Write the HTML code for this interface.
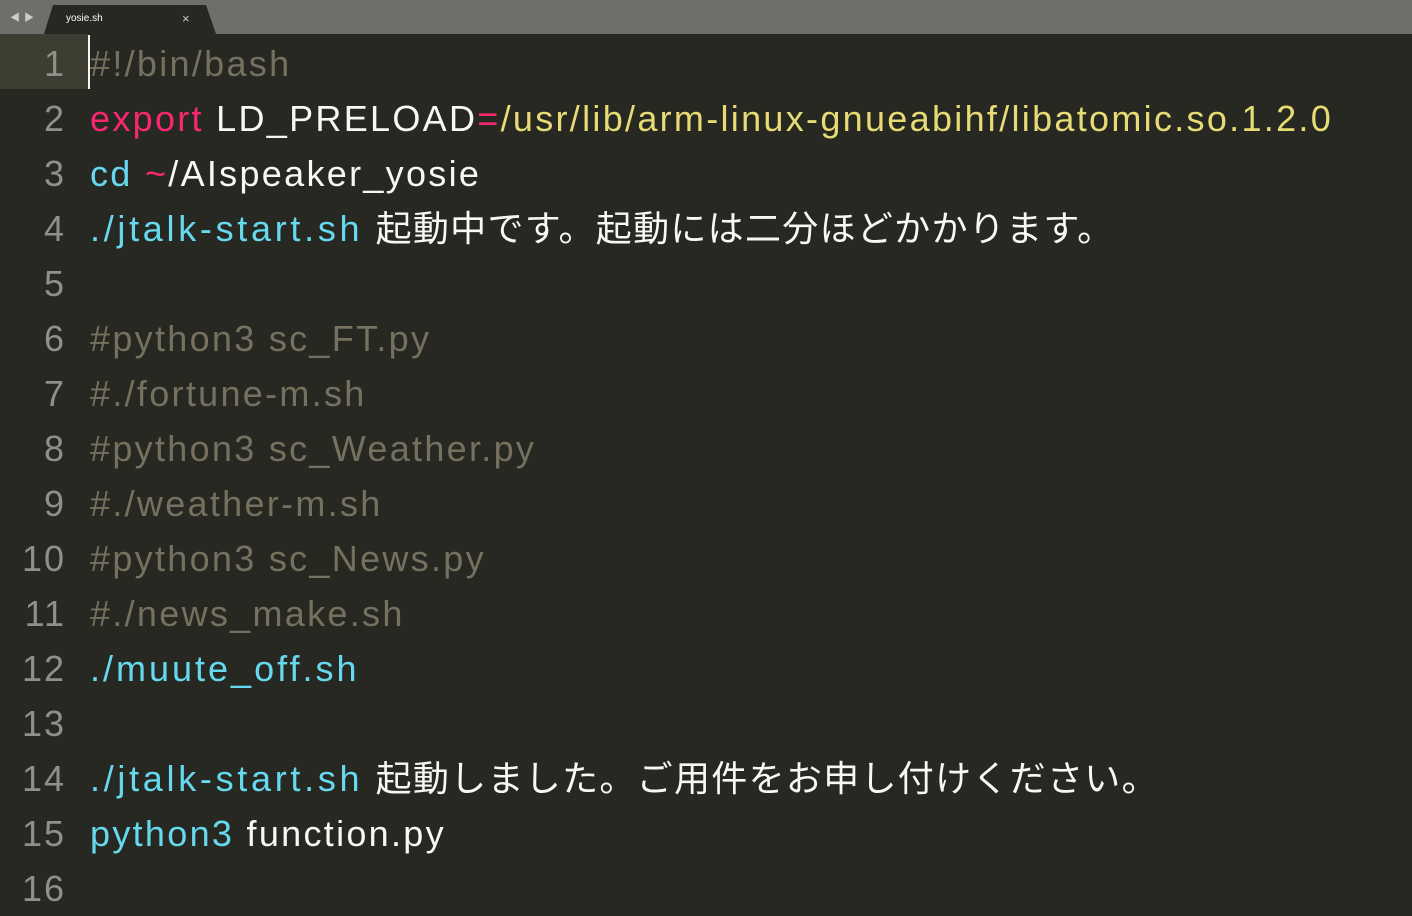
<!DOCTYPE html>
<html><head><meta charset="utf-8"><style>
body{margin:0;width:1412px;height:913px;background:#272822;overflow:hidden;font-family:"Liberation Sans","Noto Sans CJK JP",sans-serif;}
.top{position:absolute;left:0;top:0;width:1412px;height:34px;background:#6e6e6a;}
.tab{position:absolute;left:44px;top:5px;width:172px;height:29px;background:#272822;clip-path:polygon(9px 0,162px 0,172px 29px,0 29px);}
.tab span{position:absolute;left:22px;top:8px;font-size:10px;color:#fff;}
.tab b{position:absolute;left:138px;top:6px;font-size:13px;color:#ccc;font-weight:normal;}
.arr{position:absolute;top:9px;font-size:10px;color:#ccc;}
.hl{position:absolute;left:0;top:34px;width:88px;height:55px;background:#3e3d32;}
.cur{position:absolute;left:88px;top:35px;width:2px;height:54px;background:#f8f8f0;}
.ln{position:absolute;left:0;width:66px;text-align:right;font-size:36px;line-height:55px;color:#90908a;letter-spacing:2px;}
.tx{position:absolute;left:90px;font-size:36px;line-height:55px;color:#f8f8f2;white-space:pre;letter-spacing:2.3px;}
.j{letter-spacing:1.3px}
.w{letter-spacing:3.7px}
.c{color:#75715e}.p{color:#f92672}.y{color:#e6db74}.b{color:#66d9ef}
</style></head><body>
<div class="top"><span class="arr" style="left:10px">◀</span><span class="arr" style="left:24px">▶</span>
<div class="tab"><span>yosie.sh</span><b>×</b></div></div>
<div class="hl"></div><div class="cur"></div>
<div class="ln" style="top:36px">1</div><div class="tx c" style="top:36px">#!/bin/bash</div>
<div class="ln" style="top:91px">2</div><div class="tx" style="top:91px"><span class="p">export</span> LD_PRELOAD<span class="p">=</span><span class="y">/usr/lib/arm-linux-gnueabihf/libatomic.so.1.2.0</span></div>
<div class="ln" style="top:146px">3</div><div class="tx" style="top:146px"><span class="b">cd</span> <span class="p">~</span>/AIspeaker_yosie</div>
<div class="ln" style="top:201px">4</div><div class="tx" style="top:201px"><span class="b w">./jtalk-start.sh</span> <span class="j">起動中です。起動には二分ほどかかります。</span></div>
<div class="ln" style="top:256px">5</div>
<div class="ln" style="top:311px">6</div><div class="tx c" style="top:311px">#python3 sc_FT.py</div>
<div class="ln" style="top:366px">7</div><div class="tx c" style="top:366px">#./fortune-m.sh</div>
<div class="ln" style="top:421px">8</div><div class="tx c" style="top:421px">#python3 sc_Weather.py</div>
<div class="ln" style="top:476px">9</div><div class="tx c" style="top:476px">#./weather-m.sh</div>
<div class="ln" style="top:531px">10</div><div class="tx c" style="top:531px">#python3 sc_News.py</div>
<div class="ln" style="top:586px">11</div><div class="tx c" style="top:586px">#./news_make.sh</div>
<div class="ln" style="top:641px">12</div><div class="tx b" style="top:641px;letter-spacing:3px">./muute_off.sh</div>
<div class="ln" style="top:696px">13</div>
<div class="ln" style="top:751px">14</div><div class="tx" style="top:751px"><span class="b w">./jtalk-start.sh</span> <span class="j">起動しました。ご用件をお申し付けください。</span></div>
<div class="ln" style="top:806px">15</div><div class="tx" style="top:806px"><span class="b">python3</span> function.py</div>
<div class="ln" style="top:861px">16</div>
</body></html>
